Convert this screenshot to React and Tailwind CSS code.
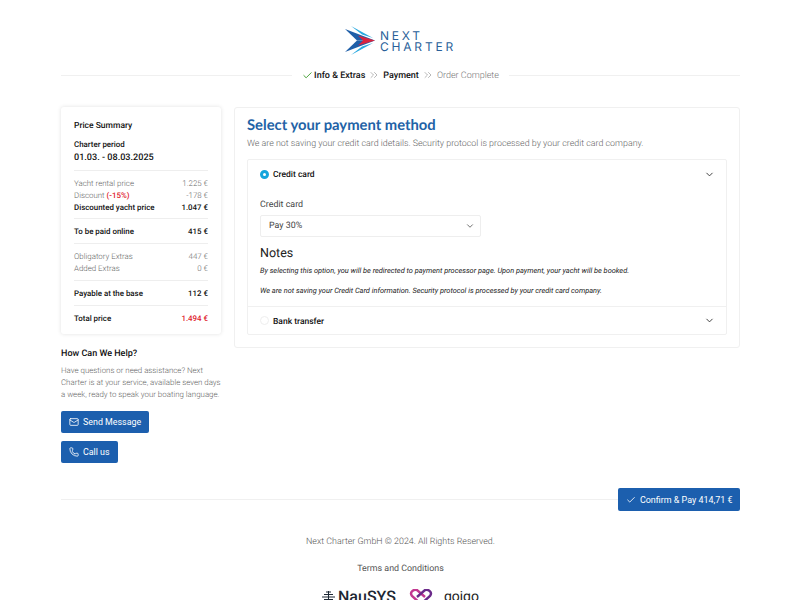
import { Check, ChevronsRight, ChevronDown, Mail, Phone } from 'lucide-react';

const Row = ({ label, value, className = '' }) => (
  <div className={`flex justify-between ${className}`}>
    <span>{label}</span>
    <span>{value}</span>
  </div>
);

const Logo = () => (
  <div className="flex items-center gap-[5px]">
    <svg width="30" height="29" viewBox="0 0 30 29">
      <path d="M0 3 L30 14.5 L12 14.5 Z" fill="#1f5fa8" />
      <path d="M0 26 L30 14.5 L12 14.5 Z" fill="#1f5fa8" />
      <path d="M6 0 L28 12 L17 8.5 Z" fill="#29a9e0" />
      <path d="M6 29 L28 17 L17 20.5 Z" fill="#29a9e0" />
      <path d="M13 9.5 L30 14.5 L13 19.5 L18 14.5 Z" fill="#d9233f" />
    </svg>
    <div className="mt-[1px] font-['Inter',sans-serif] text-[#2a5f99] text-[12px] leading-[11.5px] tracking-[0.235em] font-normal">
      <div>NEXT</div>
      <div>CHARTER</div>
    </div>
  </div>
);

const Stepper = () => (
  <div className="flex items-center mt-[13px] h-[14px]">
    <div className="flex-1 h-px bg-[#f0f0f0]" />
    <div className="flex items-center px-[10px] text-[9px] font-medium text-[#111]">
      <Check size={11} className="text-[#3a9a2a] mr-[1px]" />
      <span className="pt-[4px]">Info &amp; Extras</span>
      <ChevronsRight size={12} strokeWidth={1.2} className="text-[#888] mx-[3px]" />
      <span className="pt-[4px]">Payment</span>
      <ChevronsRight size={12} strokeWidth={1.2} className="text-[#888] mx-[3px]" />
      <span className="pt-[4px] font-light text-[#777]">Order Complete</span>
    </div>
    <div className="flex-1 h-px bg-[#f0f0f0]" />
  </div>
);

const Summary = () => (
  <div className="rounded-[3px] bg-white px-[13px] pt-[13px] pb-[10px] shadow-[0_0_4px_rgba(0,0,0,0.12)] text-[7.9px] leading-[12px]">
    <div className="font-medium text-[#111] text-[8.5px]">Price Summary</div>
    <div className="font-medium text-[#111] mt-[7px]">Charter period</div>
    <div className="font-medium text-[#111] text-[9.1px] mt-[1px] pb-[6px]">01.03. - 08.03.2025</div>
    <div className="border-t border-[#eee] pt-[7px] pb-[4px] font-light text-[#666]">
      <Row label="Yacht rental price" value="1.225 €" />
      <Row label={<>Discount <span className="font-medium text-[#e0202c]">(-15%)</span></>} value="-178 €" />
      <Row label="Discounted yacht price" value="1.047 €" className="font-medium text-[#111]" />
    </div>
    <div className="border-t border-[#eee] pt-[7px] pb-[5px]">
      <Row label="To be paid online" value="415 €" className="font-medium text-[#111]" />
    </div>
    <div className="border-t border-[#eee] pt-[7px] pb-[5px] font-light text-[#666]">
      <Row label="Obligatory Extras" value="447 €" />
      <Row label="Added Extras" value="0 €" />
    </div>
    <div className="border-t border-[#eee] pt-[7px] pb-[5px]">
      <Row label="Payable at the base" value="112 €" className="font-medium text-[#111]" />
    </div>
    <div className="border-t border-[#eee] pt-[7px] -mb-[1px] font-medium text-[#111]">
      <Row label="Total price" value={<span className="text-[#e0202c]">1.494 €</span>} />
    </div>
  </div>
);

const Help = () => (
  <div className="mt-[14px]">
    <div className="text-[9px] font-medium text-[#111] leading-[12px]">How Can We Help?</div>
    <p className="mt-[5px] text-[7.9px] font-light leading-[12px] text-[#666]">
      Have questions or need assistance? Next Charter is at your service, available seven days a week, ready to speak your boating language.
    </p>
    <div className="mt-[10px] flex flex-col items-start gap-[8px]">
      <button className="flex h-[22px] items-center gap-[4px] rounded-[2px] bg-[#1c5fae] px-[8px] text-[8.9px] text-white">
        <Mail size={10} /> <span className="pt-[2px]">Send Message</span>
      </button>
      <button className="flex h-[22px] items-center gap-[4px] rounded-[2px] bg-[#1c5fae] px-[8px] text-[8.9px] text-white">
        <Phone size={10} /> <span className="pt-[2px]">Call us</span>
      </button>
    </div>
  </div>
);

const Payment = () => (
  <div className="flex-1 self-start rounded-[3px] border border-[#f0f0f0] bg-white px-[12px] pt-[8px] pb-[12px]">
    <h1 className="font-['Lato',sans-serif] text-[14.8px] leading-[18px] font-bold text-[#2262a6]">Select your payment method</h1>
    <p className="mt-[4px] text-[8.9px] font-light leading-[12px] text-[#666]">
      We are not saving your credit card idetails. Security protocol is processed by your credit card company.
    </p>
    <div className="mt-[9px] rounded-[2px] border border-[#f0f0f0]">
      <div className="flex h-[29px] items-center px-[12px]">
        <span className="h-[9px] w-[9px] rounded-full border-[3px] border-[#14a5dc] bg-white" />
        <span className="ml-[4px] pt-[2px] text-[8.5px] font-medium text-[#111]">Credit card</span>
        <ChevronDown size={11} className="ml-auto -mr-[1px] text-[#333]" />
      </div>
      <div className="px-[12px] pt-[10px] pb-[11px]">
        <div className="text-[8.9px] leading-[12px] text-[#444]">Credit card</div>
        <div className="mt-[4px] flex h-[22px] w-[221px] items-center justify-between rounded-[2px] border border-[#eee] pl-[8px] pr-[5px] text-[8.9px] text-[#444]">
          <span className="pt-[2px]">Pay 30%</span>
          <ChevronDown size={10} className="text-[#555]" />
        </div>
        <div className="mt-[10px] text-[12.5px] leading-[14px] text-[#222]">Notes</div>
        <p className="mt-[5px] text-[7.4px] italic leading-[10px] text-[#222]">By selecting this option, you will be redirected to payment processor page. Upon payment, your yacht will be booked.</p>
        <p className="mt-[10px] -mb-[1px] text-[7.4px] italic leading-[10px] text-[#222]">We are not saving your Credit Card information. Security protocol is processed by your credit card company.</p>
      </div>
      <div className="flex h-[28px] items-center border-t border-[#f0f0f0] px-[12px]">
        <span className="h-[9px] w-[9px] rounded-full border border-[#eee] bg-white" />
        <span className="ml-[4px] pt-[3px] text-[8.5px] font-medium text-[#111]">Bank transfer</span>
        <ChevronDown size={11} className="ml-auto -mr-[1px] text-[#333]" />
      </div>
    </div>
  </div>
);

const Partners = () => (
  <div className="mt-[14px] flex items-center justify-center">
    <svg width="13" height="12" viewBox="0 0 13 12" className="mr-[3px]">
      <path d="M0 6h13M2 3.5h9M2 8.5h9M4 1h5M4 11h5M6.5 0v12" stroke="#1d2733" strokeWidth="1" />
    </svg>
    <span className="text-[16px] font-medium leading-[14px] text-[#1d2733]">NauSYS</span>
    <svg width="24" height="16" viewBox="0 0 24 16" className="ml-[13px]">
      <path d="M12 15 L3 7 C0 3 5 0 8 1 L16 8" fill="none" stroke="#c2378f" strokeWidth="2.4" />
      <path d="M12 15 L21 7 C24 3 19 0 16 1 L8 8" fill="none" stroke="#6b2a8a" strokeWidth="2.4" />
    </svg>
    <span className="ml-[11px] text-[14px] leading-[14px] text-[#222]">gojgo</span>
  </div>
);

export default function App() {
  return (
    <div className="h-[600px] overflow-hidden bg-white font-['Roboto',sans-serif] [text-rendering:geometricPrecision]">
      <div className="ml-[61px] w-[679px] pt-[26px]">
        <div className="flex justify-center">
          <Logo />
        </div>
        <Stepper />
        <div className="mt-[25px] flex items-start gap-[13px]">
          <div className="w-[160px] shrink-0">
            <Summary />
            <Help />
          </div>
          <Payment />
        </div>
        <div className="mt-[25px] flex items-center">
          <div className="h-px flex-1 bg-[#f0f0f0]" />
          <button className="flex h-[23px] items-center gap-[4px] rounded-[2px] bg-[#1c5fae] px-[7.5px] text-[8.95px] text-white">
            <Check size={10} /> <span className="pt-[2px]">Confirm &amp; Pay 414,71 €</span>
          </button>
        </div>
        <div className="mt-[25px] text-center text-[8.9px] font-light leading-[12px] text-[#555]">Next Charter GmbH © 2024. All Rights Reserved.</div>
        <div className="mt-[15px] text-center text-[8.9px] leading-[12px] text-[#555]">Terms and Conditions</div>
        <Partners />
      </div>
    </div>
  );
}
